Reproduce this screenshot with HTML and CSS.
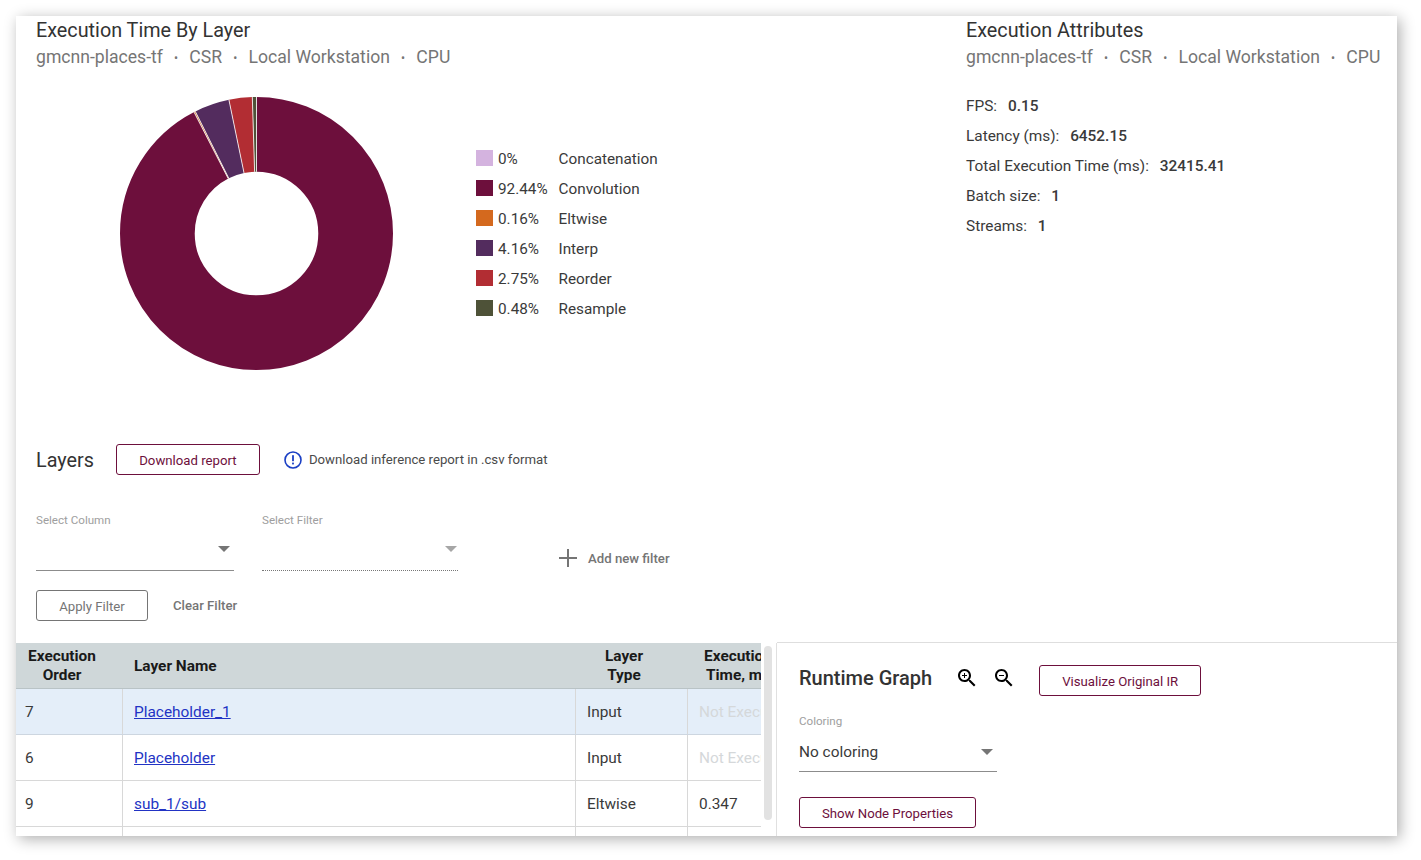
FILE: index.html
```html
<!DOCTYPE html>
<html lang="en">
<head>
    <meta charset="UTF-8">
    <title>Inference Results</title>
    <link rel="stylesheet" href="styles.css">
</head>
<body>

<div class="card">

    <!-- chart and attributes -->
    <div class="top">
        <div class="chart-col">
            <h2 class="title">Execution Time By Layer</h2>
            <div class="subtitle">
                <span>gmcnn-places-tf</span><i>•</i><span>CSR</span><i>•</i><span>Local Workstation</span><i>•</i><span>CPU</span>
            </div>
            <div class="chart-row">
                <svg class="donut" width="273" height="273" viewBox="-137 -137 274 274">
                    <g transform="rotate(-90)" fill="none" stroke-width="75">
                        <circle class="s-conv" r="99.5" pathLength="100" stroke-dasharray="92.44 100"></circle>
                        <circle class="s-elt" r="99.5" pathLength="100" stroke-dasharray="0.16 100" stroke-dashoffset="-92.44"></circle>
                        <circle class="s-interp" r="99.5" pathLength="100" stroke-dasharray="4.16 100" stroke-dashoffset="-92.6"></circle>
                        <circle class="s-reorder" r="99.5" pathLength="100" stroke-dasharray="2.75 100" stroke-dashoffset="-96.76"></circle>
                        <circle class="s-resample" r="99.5" pathLength="100" stroke-dasharray="0.49 100" stroke-dashoffset="-99.51"></circle>
                    </g>
                    <g class="seams">
                        <line x1="0" y1="-62" x2="0" y2="-137"></line>
                        <line x1="-28.4" y1="-55.1" x2="-62.7" y2="-121.8"></line>
                        <line x1="-27.8" y1="-55.4" x2="-61.4" y2="-122.5"></line>
                        <line x1="-12.5" y1="-60.7" x2="-27.7" y2="-134.2"></line>
                        <line x1="-1.9" y1="-62" x2="-4.2" y2="-136.9"></line>
                    </g>
                </svg>
                <ul class="legend">
                    <li><b class="swatch c-concat"></b><span class="pct">0%</span><span>Concatenation</span></li>
                    <li><b class="swatch c-conv"></b><span class="pct">92.44%</span><span>Convolution</span></li>
                    <li><b class="swatch c-elt"></b><span class="pct">0.16%</span><span>Eltwise</span></li>
                    <li><b class="swatch c-interp"></b><span class="pct">4.16%</span><span>Interp</span></li>
                    <li><b class="swatch c-reorder"></b><span class="pct">2.75%</span><span>Reorder</span></li>
                    <li><b class="swatch c-resample"></b><span class="pct">0.48%</span><span>Resample</span></li>
                </ul>
            </div>
        </div>

        <div class="attr-col">
            <h2 class="title">Execution Attributes</h2>
            <div class="subtitle">
                <span>gmcnn-places-tf</span><i>•</i><span>CSR</span><i>•</i><span>Local Workstation</span><i>•</i><span>CPU</span>
            </div>
            <div class="attrs">
                <div>FPS: <strong>0.15</strong></div>
                <div>Latency (ms): <strong>6452.15</strong></div>
                <div>Total Execution Time (ms): <strong>32415.41</strong></div>
                <div>Batch size: <strong>1</strong></div>
                <div>Streams: <strong>1</strong></div>
            </div>
        </div>
    </div>

    <!-- layers toolbar -->
    <div class="layers">
        <div class="layers-head">
            <h2 class="title">Layers</h2>
            <button class="btn btn-primary btn-report">Download report</button>
            <svg class="info-icon" width="18" height="18" viewBox="0 0 18 18">
                <circle cx="9" cy="9" r="8" fill="none" stroke="#1a3fc4" stroke-width="1.6"></circle>
                <rect x="8.1" y="4.2" width="1.8" height="6" fill="#1a3fc4"></rect>
                <rect x="8.1" y="11.6" width="1.8" height="1.8" fill="#1a3fc4"></rect>
            </svg>
            <span class="info-text">Download inference report in .csv format</span>
        </div>

        <div class="filters">
            <div class="field">
                <label>Select Column</label>
                <div class="select"><b class="arrow"></b></div>
            </div>
            <div class="field field-off">
                <label>Select Filter</label>
                <div class="select"><b class="arrow"></b></div>
            </div>
            <div class="add-filter">
                <svg width="18" height="18" viewBox="0 0 18 18">
                    <path d="M8 0h2v8h8v2h-8v8H8v-8H0V8h8z" fill="#757575"></path>
                </svg>
                <span>Add new filter</span>
            </div>
        </div>

        <div class="filter-actions">
            <button class="btn btn-apply">Apply Filter</button>
            <span class="clear">Clear Filter</span>
        </div>
    </div>

    <!-- table and graph -->
    <div class="bottom">
        <div class="table-panel">
            <div class="table-clip">
                <table class="layer-table">
                    <colgroup>
                        <col class="col-order">
                        <col class="col-name">
                        <col class="col-type">
                        <col class="col-time">
                    </colgroup>
                    <thead>
                        <tr>
                            <th>Execution Order</th>
                            <th class="th-name">Layer Name</th>
                            <th>Layer<br>Type</th>
                            <th>Execution Time, ms</th>
                        </tr>
                    </thead>
                    <tbody>
                        <tr class="selected">
                            <td class="td-order">7</td>
                            <td><a href="#">Placeholder_1</a></td>
                            <td>Input</td>
                            <td class="muted">Not Executed</td>
                        </tr>
                        <tr>
                            <td class="td-order">6</td>
                            <td><a href="#">Placeholder</a></td>
                            <td>Input</td>
                            <td class="muted">Not Executed</td>
                        </tr>
                        <tr>
                            <td class="td-order">9</td>
                            <td><a href="#">sub_1/sub</a></td>
                            <td>Eltwise</td>
                            <td>0.347</td>
                        </tr>
                        <tr>
                            <td class="td-order"></td>
                            <td></td>
                            <td></td>
                            <td></td>
                        </tr>
                    </tbody>
                </table>
            </div>
            <div class="scrollbar"><b class="thumb"></b></div>
        </div>

        <div class="graph-panel">
            <div class="graph-head">
                <h3 class="graph-title">Runtime Graph</h3>
                <svg class="zoom-icon" width="24" height="24" viewBox="0 0 24 24">
                    <path d="M15.5 14h-.79l-.28-.27C15.41 12.59 16 11.11 16 9.5 16 5.91 13.09 3 9.5 3S3 5.91 3 9.5 5.91 16 9.5 16c1.61 0 3.09-.59 4.23-1.57l.27.28v.79l5 4.99L20.49 19l-4.99-5zm-6 0C7.01 14 5 11.99 5 9.5S7.01 5 9.5 5 14 7.01 14 9.5 11.99 14 9.5 14z"></path>
                    <path d="M12 10h-2v2H9v-2H7V9h2V7h1v2h2v1z"></path>
                </svg>
                <svg class="zoom-icon" width="24" height="24" viewBox="0 0 24 24">
                    <path d="M15.5 14h-.79l-.28-.27C15.41 12.59 16 11.11 16 9.5 16 5.91 13.09 3 9.5 3S3 5.91 3 9.5 5.91 16 9.5 16c1.61 0 3.09-.59 4.23-1.57l.27.28v.79l5 4.99L20.49 19l-4.99-5zm-6 0C7.01 14 5 11.99 5 9.5S7.01 5 9.5 5 14 7.01 14 9.5 11.99 14 9.5 14z"></path>
                    <path d="M7 9h5v1H7z"></path>
                </svg>
                <button class="btn btn-primary btn-visualize">Visualize Original IR</button>
            </div>
            <div class="field field-color">
                <label>Coloring</label>
                <div class="select">No coloring<b class="arrow"></b></div>
            </div>
            <button class="btn btn-primary btn-props">Show Node Properties</button>
        </div>
    </div>

</div>

</body>
</html>
```

FILE: styles.css
```css
* {
    margin: 0;
    padding: 0;
    box-sizing: border-box;
}

body {
    height: 860px;
    padding: 16px 24px 24px 16px;
    overflow: hidden;
    background-color: #fff;
    font-family: Roboto, "Liberation Sans", sans-serif;
    color: #3a3a3a;
}

.card {
    height: 820px;
    background-color: #fff;
    box-shadow: 3px 3px 14px rgba(0, 0, 0, .32);
    overflow: hidden;
}

/* top part */
.top {
    height: 428px;
    padding-left: 20px;
    display: flex;
}

.chart-col {
    width: 930px;
}

.title {
    padding-top: 1px;
    font-size: 19.8px;
    font-weight: 400;
    line-height: 27px;
    color: #333;
}

.subtitle {
    font-size: 17.6px;
    line-height: 26px;
    color: #757575;
    white-space: nowrap;
}

.subtitle i {
    font-style: normal;
    font-size: 12px;
    margin: 0 11.2px;
    vertical-align: 1px;
}

.chart-row {
    display: flex;
    margin: 26px 0 0 84px;
}

.donut {
    flex: none;
}

.s-conv { stroke: #6d0f3c; }
.s-elt { stroke: #d4691e; }
.s-interp { stroke: #532c5e; }
.s-reorder { stroke: #b22d33; }
.s-resample { stroke: #4e5238; }

.seams line {
    stroke: #fff;
    stroke-width: .8;
}

.legend {
    list-style: none;
    margin: 47px 0 0 83px;
    font-size: 15.3px;
}

.legend li {
    height: 30px;
    display: flex;
    align-items: center;
    white-space: nowrap;
}

.swatch {
    align-self: flex-start;
    width: 17px;
    height: 16px;
    margin: 6px 5px 0 0;
}

.pct {
    width: 60.5px;
}

.c-concat { background-color: #d4b3df; }
.c-conv { background-color: #6d0f3c; }
.c-elt { background-color: #d4691e; }
.c-interp { background-color: #532c5e; }
.c-reorder { background-color: #b22d33; }
.c-resample { background-color: #4e5238; }

.attrs {
    margin-top: 20px;
    font-size: 15.4px;
}

.attrs div {
    height: 30px;
    line-height: 30px;
}

.attrs strong {
    font-weight: 500;
    margin-left: 7px;
}

/* layers toolbar */
.layers {
    height: 198px;
    padding-left: 20px;
}

.layers-head {
    height: 31px;
    display: flex;
    align-items: center;
}

.btn {
    height: 31px;
    padding-top: 2px;
    background-color: #fff;
    border: 1px solid #757575;
    border-radius: 3px;
    font-family: inherit;
    font-size: 13.2px;
    color: #757575;
}

.btn-primary {
    border-color: #6d0f3c;
    color: #6d0f3c;
}

.btn-report {
    width: 144px;
    margin-left: 22px;
}

.info-icon {
    margin-left: 24px;
}

.info-text {
    margin-left: 7px;
    font-size: 13.2px;
    color: #4a4a4a;
}

.filters {
    display: flex;
    margin-top: 38px;
}

.field {
    width: 198px;
    margin-right: 28px;
}

.field-off {
    width: 196px;
}

.field label {
    display: block;
    height: 14px;
    line-height: 14px;
    font-size: 11.6px;
    color: #9e9e9e;
}

.select {
    position: relative;
    height: 44px;
    border-bottom: 1px solid #8c8c8c;
}

.field-off .select {
    border-bottom: 1px dotted #777;
}

.arrow {
    position: absolute;
    right: 4px;
    top: 19px;
    border-left: 6px solid transparent;
    border-right: 6px solid transparent;
    border-top: 6px solid #757575;
}

.field-off .arrow {
    border-top-color: #a6a6a6;
    right: 1px;
}

.add-filter {
    display: flex;
    align-items: center;
    margin: 32px 0 0 73px;
    height: 26px;
    font-size: 13.2px;
    font-weight: 500;
    color: #757575;
}

.add-filter svg {
    margin-right: 11px;
}

.filter-actions {
    display: flex;
    align-items: center;
    margin-top: 19px;
}

.btn-apply {
    width: 112px;
}

.clear {
    margin-left: 25px;
    font-size: 13.2px;
    font-weight: 500;
    color: #757575;
}

/* bottom part */
.bottom {
    height: 194px;
    display: flex;
}

.table-panel {
    width: 761px;
    flex: none;
    margin-top: 1px;
    display: flex;
}

.table-clip {
    width: 745px;
    overflow: hidden;
}

.layer-table {
    width: 787px;
    table-layout: fixed;
    border-collapse: collapse;
    font-size: 15.4px;
}

.col-order { width: 106px; }
.col-name { width: 453px; }
.col-type { width: 112px; }
.col-time { width: 116px; }

.layer-table th {
    height: 45px;
    padding: 4px 19px 2px 5px;
    background-color: #cfd7d9;
    border-bottom: 1px solid #b9c3c6;
    font-weight: 700;
    font-size: 15.4px;
    line-height: 19px;
    color: #1a1a1a;
}

.layer-table th.th-name {
    padding-left: 12px;
    text-align: left;
}

.layer-table td {
    height: 46px;
    padding: 2px 11.5px 0;
    border-right: 1px solid #d8d8d8;
    border-bottom: 1px solid #d8d8d8;
    white-space: nowrap;
    overflow: hidden;
}

.layer-table td.td-order {
    padding-left: 9px;
}

.selected td {
    background-color: #e4eef9;
    border-bottom-color: #cdd6e0;
}

.layer-table a {
    color: #2233c4;
}

.layer-table td.muted {
    color: #d5d8da;
}

.scrollbar {
    width: 16px;
    padding: 3px 3px 0 3px;
    border-right: 1px solid #e0e0e0;
}

.thumb {
    display: block;
    width: 8px;
    height: 174px;
    border-radius: 4px;
    background-color: #e2e2e2;
}

.graph-panel {
    flex: 1;
    padding-left: 22px;
    border-top: 1px solid #dedede;
}

.graph-head {
    height: 31px;
    margin-top: 22px;
    display: flex;
    align-items: center;
}

.graph-title {
    font-size: 20px;
    font-weight: 500;
    color: #333;
    margin-top: -5px;
}

.zoom-icon {
    margin: -6px 0 0 13px;
}

.graph-title + .zoom-icon {
    margin-left: 23px;
}

.btn-visualize {
    width: 162px;
    margin-left: 23px;
}

.field-color {
    margin-top: 18px;
}

.field-color .select {
    height: 44px;
    line-height: 48px;
    font-size: 15.4px;
    color: #3a3a3a;
    border-bottom: 1px solid #8c8c8c;
}

.field-color .arrow {
    top: 21px;
}

.btn-props {
    display: block;
    width: 177px;
    margin-top: 25px;
}
```
